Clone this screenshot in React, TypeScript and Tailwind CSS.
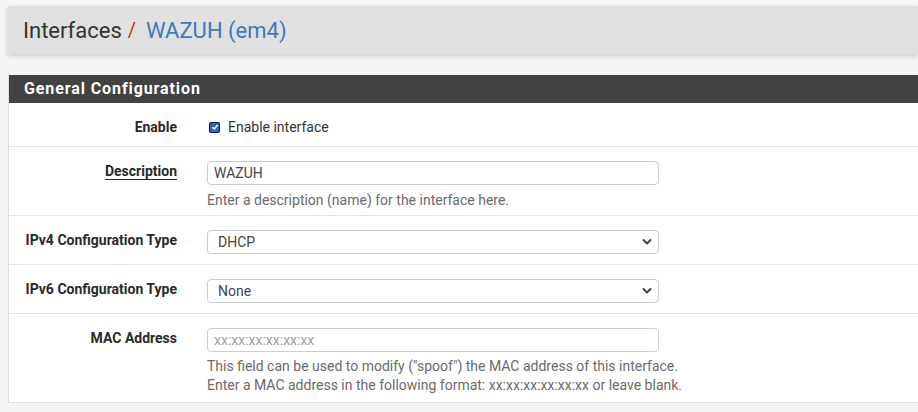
import React from "react";

function Chevron() {
  return (
    <svg width="10" height="8" viewBox="0 0 10 8" className="absolute right-[6px] top-1/2 -translate-y-1/2">
      <path d="M1.5 2 L5 5.5 L8.5 2" fill="none" stroke="#444" strokeWidth="2" strokeLinecap="round" strokeLinejoin="round" />
    </svg>
  );
}

function Row({
  label,
  underline,
  children,
  className,
}: {
  label: string;
  underline?: boolean;
  children: React.ReactNode;
  className?: string;
}) {
  return (
    <div className={"flex border-b border-[#e3e3e3] " + (className ?? "")}>
      <div className="w-[168px] shrink-0 text-right text-[14px] font-bold text-[#2a2a2a]">
        <span className={underline ? "underline decoration-[1px] underline-offset-[3px]" : ""}>{label}</span>
      </div>
      <div className="ml-[30px] w-[452px]">{children}</div>
    </div>
  );
}

function Select({ value }: { value: string }) {
  return (
    <div className="relative h-[24px] w-[452px] rounded-[4px] border border-[#ccc] bg-white pl-[10px] text-[14px] leading-[22px] text-[#444]">
      {value}
      <Chevron />
    </div>
  );
}

export default function App() {
  return (
    <div className="h-[412px] w-[918px] overflow-hidden bg-[#f5f5f5] pl-2 pt-[6px] font-['Roboto',sans-serif]">
      <div className="flex h-[48px] items-center bg-[#e0e0e0] pl-[15px] shadow-[0_2px_5px_rgba(0,0,0,0.18)]">
        <span className="text-[22px] text-[#333]">Interfaces</span>
        <span className="ml-[6px] text-[20px] text-[#c9302c]">/</span>
        <span className="ml-[10px] text-[22px] text-[#3c7bb8]">WAZUH (em4)</span>
      </div>

      <div className="mt-[21px] border-l border-[#ddd] bg-white">
        <div className="flex h-[28px] items-center bg-[#424242] pl-[15px] text-[16px] font-bold tracking-[0.9px] text-white">
          General Configuration
        </div>

        <Row label="Enable" className="h-[44px] pt-[14px]">
          <div className="flex items-center text-[14px] leading-[20px] text-[#333]">
            <span className="ml-[2px] flex h-[11px] w-[11px] items-center justify-center rounded-[2px] bg-[#0b1f3a] p-[1px]">
              <span className="flex h-full w-full items-center justify-center rounded-[1px] bg-[#2b63c5]">
                <svg width="8" height="8" viewBox="0 0 8 8">
                  <path d="M1.5 4.2 L3.3 6 L6.6 2" fill="none" stroke="white" strokeWidth="1.6" />
                </svg>
              </span>
            </span>
            <span className="ml-[8px]">Enable interface</span>
          </div>
        </Row>

        <Row label="Description" underline className="h-[69px] pt-[14px]">
          <div className="h-[24px] w-[452px] rounded-[4px] border border-[#ccc] bg-white pl-[6px] text-[14px] leading-[22px] text-[#444]">
            WAZUH
          </div>
          <div className="mt-[5px] text-[14px] text-[#6b6b6b]">
            Enter a description (name) for the interface here.
          </div>
        </Row>

        <Row label="IPv4 Configuration Type" className="h-[49px] pt-[14px]">
          <Select value="DHCP" />
        </Row>

        <Row label="IPv6 Configuration Type" className="h-[49px] pt-[14px]">
          <Select value="None" />
        </Row>

        <Row label="MAC Address" className="h-[89px] pt-[14px]">
          <div className="h-[24px] w-[452px] rounded-[4px] border border-[#ccc] bg-white pl-[6px] text-[14px] leading-[22px] text-[#a0a0a0]">
            xx:xx:xx:xx:xx:xx
          </div>
          <div className="mt-[5px] whitespace-nowrap text-[14px] leading-[19px] text-[#6b6b6b]">
            <div>This field can be used to modify ("spoof") the MAC address of this interface.</div>
            <div>Enter a MAC address in the following format: xx:xx:xx:xx:xx:xx or leave blank.</div>
          </div>
        </Row>
      </div>
    </div>
  );
}
